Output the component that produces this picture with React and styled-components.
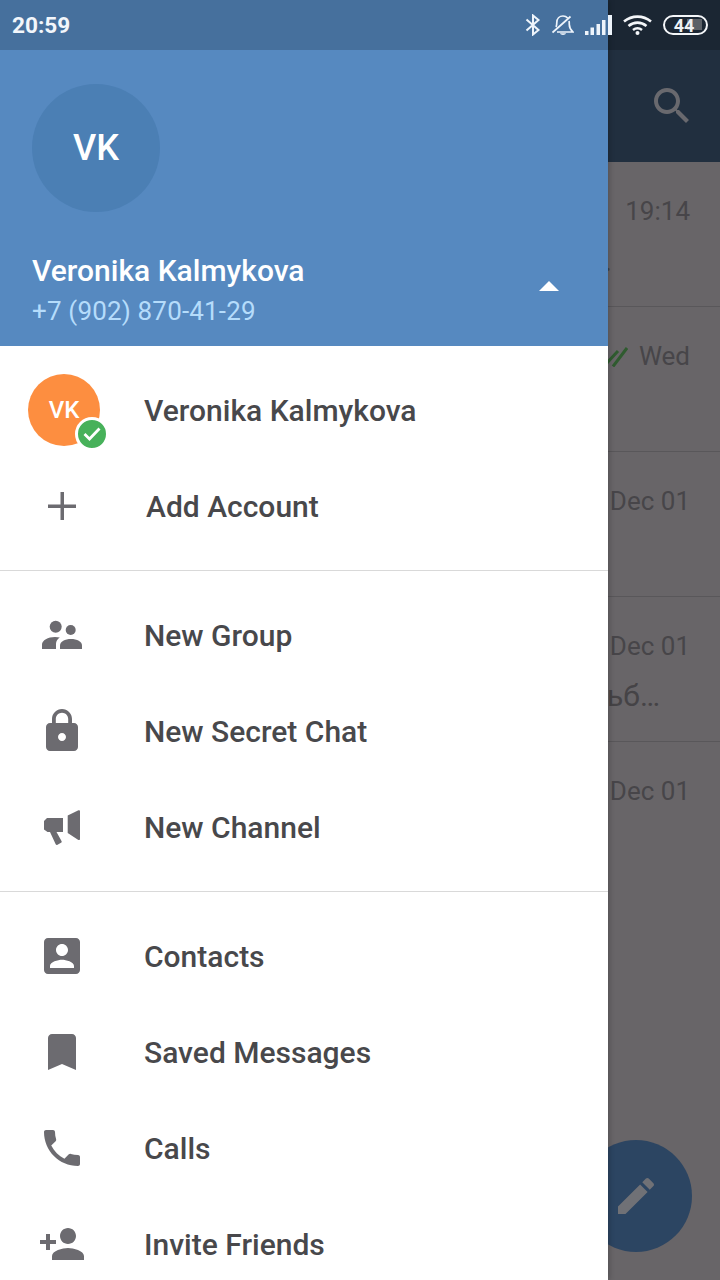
import React from 'react';
import styled, { createGlobalStyle } from 'styled-components';

const Global = createGlobalStyle`
  html, body {
    margin: 0;
    padding: 0;
    background: #686568;
  }
  * {
    box-sizing: border-box;
  }
`;

const paths = {
  lock: 'M18 8h-1V6c0-2.76-2.24-5-5-5S7 3.24 7 6v2H6c-1.1 0-2 .9-2 2v10c0 1.1.9 2 2 2h12c1.1 0 2-.9 2-2V10c0-1.1-.9-2-2-2zm-6 9c-1.1 0-2-.9-2-2s.9-2 2-2 2 .9 2 2-.9 2-2 2zm3.1-9H8.9V6c0-1.71 1.39-3.1 3.1-3.1 1.71 0 3.1 1.39 3.1 3.1v2z',
  contact: 'M3 5v14c0 1.1.89 2 2 2h14c1.1 0 2-.9 2-2V5c0-1.1-.9-2-2-2H5c-1.11 0-2 .9-2 2zm12 4c0 1.66-1.34 3-3 3s-3-1.34-3-3 1.34-3 3-3 3 1.34 3 3zm-9 8c0-2 4-3.1 6-3.1s6 1.1 6 3.1v1H6v-1z',
  bookmark: 'M17 3H7c-1.1 0-2 .9-2 2v16l7-3 7 3V5c0-1.1-.9-2-2-2z',
  phone: 'M6.62 10.79c1.44 2.83 3.76 5.14 6.59 6.59l2.2-2.2c.27-.27.67-.36 1.02-.24 1.12.37 2.33.57 3.57.57.55 0 1 .45 1 1V20c0 .55-.45 1-1 1-9.39 0-17-7.61-17-17 0-.55.45-1 1-1h3.5c.55 0 1 .45 1 1 0 1.25.2 2.45.57 3.57.11.35.03.74-.25 1.02l-2.2 2.2z',
  personAdd: 'M15 12c2.21 0 4-1.79 4-4s-1.79-4-4-4-4 1.79-4 4 1.79 4 4 4zm-9-2V7H4v3H1v2h3v3h2v-3h3v-2H6zm9 4c-2.67 0-8 1.34-8 4v2h16v-2c0-2.66-5.33-4-8-4z',
  search: 'M15.5 14h-.79l-.28-.27C15.41 12.59 16 11.11 16 9.5 16 5.91 13.09 3 9.5 3S3 5.91 3 9.5 5.91 16 9.5 16c1.61 0 3.09-.59 4.23-1.57l.27.28v.79l5 4.99L20.49 19l-4.99-5zm-6 0C7.01 14 5 11.99 5 9.5S7.01 5 9.5 5 14 7.01 14 9.5 11.99 14 9.5 14z',
  edit: 'M3 17.25V21h3.75L17.81 9.94l-3.75-3.75L3 17.25zM20.71 7.04c.39-.39.39-1.02 0-1.41l-2.34-2.34c-.39-.39-1.02-.39-1.41 0l-1.83 1.83 3.75 3.75 1.83-1.83z',
};

const MaterialIcon = ({ name }) => (
  <svg width="48" height="48" viewBox="0 0 24 24" fill="currentColor">
    <path d={paths[name]} />
  </svg>
);

const GroupIcon = () => (
  <svg width="48" height="48" viewBox="0 0 48 48" fill="currentColor">
    <circle cx="17.7" cy="15.7" r="6" />
    <circle cx="32.7" cy="19" r="5" />
    <path d="M4 38v-4.500c0-4 6-7.500 13-7.500 1.800 0 3.500.2 4.800.6-2.300 1.700-3.800 3.800-3.800 6.400v5z" />
    <path d="M22 38v-3.500c0-4 5-6.500 11-6.500s11 2.500 11 6.500v3.500z" />
  </svg>
);

const ChannelIcon = () => (
  <svg width="48" height="48" viewBox="0 0 48 48" fill="currentColor">
    <path d="M6 18l3-3h16v14H9.500l-3.500-2.500z" />
    <path d="M12 29h6.500l5 9c.4.8.2 1.400-.5 1.800l-3.500 2c-.8.4-1.400.2-1.800-.6z" />
    <path d="M29.700 12.500l10.800-5.200c.8-.4 1.500.1 1.500 1v27.700c0 .9-.8 1.400-1.600.9l-10.700-7z" />
  </svg>
);

const PlusIcon = () => (
  <svg width="48" height="48" viewBox="0 0 48 48" fill="currentColor">
    <path d="M22.500 10h3.500v12.500h12v3.500h-12v12h-3.500v-12h-12.500v-3.500h12.500z" />
  </svg>
);

const BluetoothIcon = () => (
  <svg width="16" height="22" viewBox="0 0 16 22" fill="none" stroke="#eef4fb" strokeWidth="2">
    <path d="M1.500 5.500l12 10.500-5.500 4.500v-19l5.500 4.500-12 10.500" />
  </svg>
);

const BellOffIcon = () => (
  <svg width="22" height="22" viewBox="0 0 22 22" fill="none" stroke="#eef4fb" strokeWidth="1.700">
    <path d="M4 13c.5-1 .8-2.500.8-4.500C4.800 4.500 7.500 2 11 2c2 0 3.500.7 4.700 2" />
    <path d="M17 7c.3 1 .3 2 .3 3.500 0 3 1 5 3.700 7.500H5" />
    <path d="M8 19.300h6c-.5 2.200-5.500 2.200-6 0z" fill="#eef4fb" stroke="none" />
    <path d="M.5 18.500L18.500 2.500" />
  </svg>
);

const SignalIcon = () => (
  <svg width="27" height="20" viewBox="0 0 27 20" fill="#eef4fb">
    <rect x="0" y="16" width="3.500" height="4" />
    <rect x="5.500" y="12.500" width="3.500" height="7.500" />
    <rect x="11.500" y="9" width="3.500" height="11" />
    <rect x="17" y="5" width="3.500" height="15" />
    <rect x="23" y="0" width="4" height="20" />
  </svg>
);

const WifiIcon = () => (
  <svg width="29" height="20" viewBox="0 0 29 20" fill="none" stroke="#f4f6f9" strokeWidth="2.600">
    <path d="M1 6.500c8-6.500 19-6.500 27 0" />
    <path d="M5.500 11c5.500-4.500 12.500-4.500 18 0" />
    <path d="M10 15c3-2.300 6-2.300 9 0" />
    <circle cx="14.500" cy="18" r="2" fill="#f4f6f9" stroke="none" />
  </svg>
);

const DoubleCheck = () => (
  <svg width="22" height="22" viewBox="0 0 22 22" fill="none" stroke="#2f5b2f" strokeWidth="3">
    <path d="M0 19L12 6M7 21.500L21 3" />
  </svg>
);

const accounts = [{ label: 'Veronika Kalmykova' }];

const groups = [
  [
    { label: 'New Group', icon: <GroupIcon /> },
    { label: 'New Secret Chat', icon: <MaterialIcon name="lock" /> },
    { label: 'New Channel', icon: <ChannelIcon /> },
  ],
  [
    { label: 'Contacts', icon: <MaterialIcon name="contact" /> },
    { label: 'Saved Messages', icon: <MaterialIcon name="bookmark" /> },
    { label: 'Calls', icon: <MaterialIcon name="phone" /> },
    { label: 'Invite Friends', icon: <MaterialIcon name="personAdd" /> },
  ],
];

const chats = [
  { time: '19:14', preview: '.', previewGap: 108 },
  { time: 'Wed', checked: true },
  { time: 'Dec 01' },
  { time: 'Dec 01', preview: 'ьб…', previewGap: 60 },
  { time: 'Dec 01', last: true },
];

export default function App() {
  return (
    <Page>
      <Global />
      <ChatScreen>
        <AppBar>
          <SearchButton>
            <MaterialIcon name="search" />
          </SearchButton>
        </AppBar>
        {chats.map((chat, i) => (
          <ChatRow key={i} $last={chat.last}>
            <ChatMeta>
              {chat.checked && <DoubleCheck />}
              <ChatTime>{chat.time}</ChatTime>
            </ChatMeta>
            {chat.preview && <ChatPreview $gap={chat.previewGap}>{chat.preview}</ChatPreview>}
          </ChatRow>
        ))}
        <Fab>
          <MaterialIcon name="edit" />
        </Fab>
      </ChatScreen>

      <Drawer>
        <Header>
          <BigAvatar>VK</BigAvatar>
          <HeaderFoot>
            <div>
              <HeaderName>Veronika Kalmykova</HeaderName>
              <HeaderPhone>+7 (902) 870-41-29</HeaderPhone>
            </div>
            <Caret />
          </HeaderFoot>
        </Header>

        <Section>
          {accounts.map((account) => (
            <Row key={account.label}>
              <AvatarSlot>
                <SmallAvatar>
                  VK
                  <CheckBadge>
                    <svg width="18" height="14" viewBox="0 0 18 14" fill="none" stroke="#fff" strokeWidth="2.800">
                      <path d="M1.500 7l5 5 10-10.500" />
                    </svg>
                  </CheckBadge>
                </SmallAvatar>
              </AvatarSlot>
              <RowLabel>{account.label}</RowLabel>
            </Row>
          ))}
          <Row>
            <IconSlot>
              <PlusIcon />
            </IconSlot>
            <RowLabel $shift={2}>Add Account</RowLabel>
          </Row>
        </Section>

        {groups.map((group, i) => (
          <Section key={i} $ruled>
            {group.map((item) => (
              <Row key={item.label}>
                <IconSlot>{item.icon}</IconSlot>
                <RowLabel>{item.label}</RowLabel>
              </Row>
            ))}
          </Section>
        ))}
      </Drawer>

      <StatusBar>
        <StatusTime>20:59</StatusTime>
        <StatusIcons>
          <BluetoothIcon />
          <BellOffIcon />
          <SignalIcon />
          <WifiIcon />
          <Battery>
            <BatteryFill />
            <BatteryText>44</BatteryText>
          </Battery>
        </StatusIcons>
      </StatusBar>
    </Page>
  );
}

const Page = styled.div`
  position: relative;
  width: 720px;
  height: 1280px;
  overflow: hidden;
  background: #686568;
  font-family: 'Roboto', 'Liberation Sans', sans-serif;
`;

const ChatScreen = styled.div`
  position: relative;
  height: 100%;
  display: flex;
  flex-direction: column;
`;

const AppBar = styled.div`
  height: 162px;
  padding: 82px 24px 0 0;
  background: #212f3f;
  display: flex;
  justify-content: flex-end;
  align-items: flex-start;
  flex-shrink: 0;
`;

const SearchButton = styled.div`
  width: 48px;
  height: 48px;
  color: #69696e;
`;

const ChatRow = styled.div`
  height: 145px;
  padding: 34px 30px 0 0;
  flex-shrink: 0;
  border-bottom: ${(p) => (p.$last ? 'none' : '1px solid #59575a')};
`;

const ChatMeta = styled.div`
  height: 30px;
  display: flex;
  justify-content: flex-end;
  align-items: center;
  gap: 11px;
`;

const ChatTime = styled.span`
  font-size: 26px;
  line-height: 30px;
  color: #474549;
`;

const ChatPreview = styled.div`
  margin-top: 17px;
  padding-right: ${(p) => p.$gap - 30}px;
  text-align: right;
  font-size: 30px;
  line-height: 36px;
  color: #454346;
`;

const Fab = styled.div`
  position: absolute;
  left: 580px;
  top: 1140px;
  width: 112px;
  height: 112px;
  border-radius: 50%;
  background: #2c4562;
  color: #707176;
  display: flex;
  align-items: center;
  justify-content: center;
`;

const Drawer = styled.div`
  position: absolute;
  left: 0;
  top: 0;
  width: 608px;
  height: 1280px;
  background: #fff;
  box-shadow: 2px 0 5px rgba(0, 0, 0, 0.18);
`;

const Header = styled.div`
  height: 346px;
  padding: 84px 32px 0;
  background: #5689c0;
`;

const BigAvatar = styled.div`
  width: 128px;
  height: 128px;
  border-radius: 50%;
  background: #4b7fb4;
  color: #fff;
  font-size: 36px;
  font-weight: 500;
  display: flex;
  align-items: center;
  justify-content: center;
`;

const HeaderFoot = styled.div`
  margin-top: 40px;
  padding-right: 17px;
  display: flex;
  justify-content: space-between;
  align-items: center;
`;

const HeaderName = styled.div`
  font-size: 30px;
  line-height: 38px;
  font-weight: 500;
  color: #fff;
`;

const HeaderPhone = styled.div`
  font-size: 26px;
  line-height: 40px;
  letter-spacing: 0.17px;
  color: #b5dcfb;
  margin-top: 1px;
`;

const Caret = styled.div`
  width: 0;
  height: 0;
  margin-top: -12px;
  border-left: 10px solid transparent;
  border-right: 10px solid transparent;
  border-bottom: 10px solid #fff;
`;

const Section = styled.div`
  padding: 16px 0;
  border-top: ${(p) => (p.$ruled ? '1px solid #d9d9d9' : 'none')};
`;

const Row = styled.div`
  height: 96px;
  display: flex;
  align-items: center;
`;

const IconSlot = styled.div`
  width: 144px;
  height: 48px;
  padding-left: 38px;
  color: #6c6b70;
  flex-shrink: 0;
`;

const AvatarSlot = styled.div`
  width: 144px;
  padding-left: 28px;
  flex-shrink: 0;
`;

const SmallAvatar = styled.div`
  position: relative;
  width: 72px;
  height: 72px;
  border-radius: 50%;
  background: #fd8e40;
  color: #fff;
  font-size: 24px;
  font-weight: 500;
  display: flex;
  align-items: center;
  justify-content: center;
`;

const CheckBadge = styled.div`
  position: absolute;
  left: 47px;
  top: 43px;
  width: 34px;
  height: 34px;
  border-radius: 50%;
  background: #47b15a;
  border: 3px solid #fff;
  display: flex;
  align-items: center;
  justify-content: center;
`;

const RowLabel = styled.div`
  margin-left: ${(p) => p.$shift || 0}px;
  font-size: 30px;
  font-weight: 500;
  color: #48484b;
`;

const StatusBar = styled.div`
  position: absolute;
  left: 0;
  top: 0;
  width: 720px;
  height: 50px;
  padding: 0 12px;
  background: rgba(0, 0, 0, 0.18);
  display: flex;
  align-items: center;
  justify-content: space-between;
`;

const StatusTime = styled.div`
  font-size: 22.6px;
  font-weight: 700;
  color: #f2f6fb;
`;

const StatusIcons = styled.div`
  display: flex;
  align-items: center;
  gap: 11px;
`;

const Battery = styled.div`
  position: relative;
  width: 45px;
  height: 20px;
  border: 2.5px solid #f4f6f9;
  border-radius: 10px;
  overflow: hidden;
  display: flex;
  align-items: center;
  justify-content: center;
`;

const BatteryFill = styled.div`
  position: absolute;
  left: 22px;
  top: 2px;
  width: 15px;
  height: 11px;
  background: #5b6067;
`;

const BatteryText = styled.span`
  position: relative;
  font-size: 18px;
  line-height: 15px;
  font-weight: 700;
  color: #eef1f4;
  margin-right: 3px;
`;
